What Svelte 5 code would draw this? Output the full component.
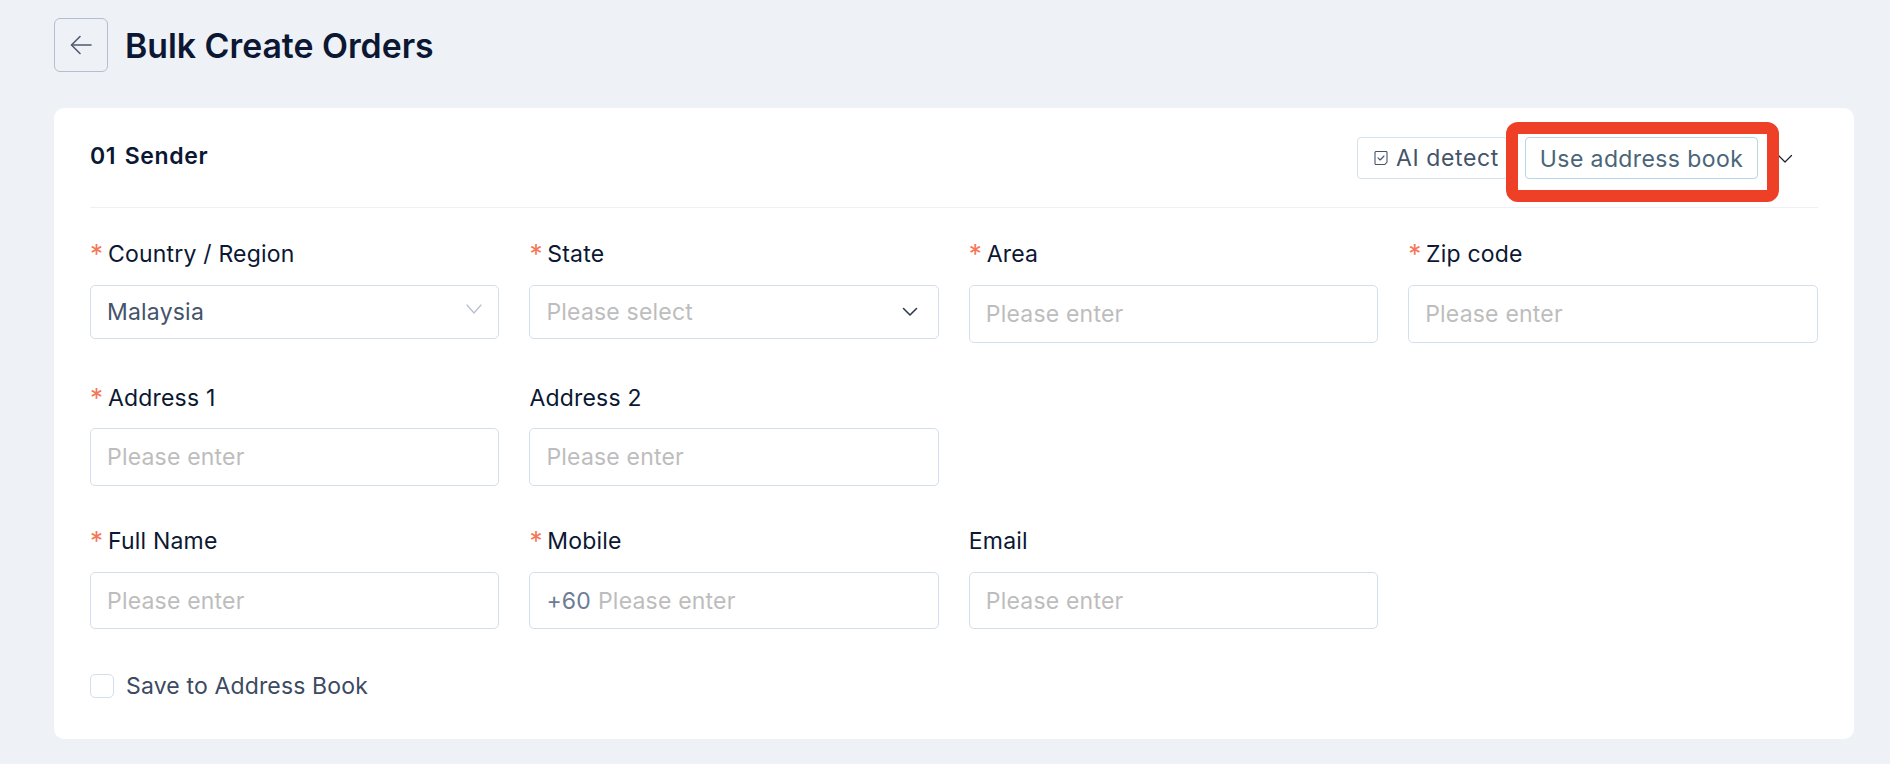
<script>
  const rows = [
    [
      { label: 'Country / Region', required: true, kind: 'select', value: 'Malaysia' },
      { label: 'State', required: true, kind: 'select', placeholder: 'Please select' },
      { label: 'Area', required: true },
      { label: 'Zip code', required: true }
    ],
    [
      { label: 'Address 1', required: true },
      { label: 'Address 2' }
    ],
    [
      { label: 'Full Name', required: true },
      { label: 'Mobile', required: true, prefix: '+60' },
      { label: 'Email' }
    ]
  ];
</script>

<div class="page">
  <header class="top">
    <button class="back" aria-label="Back">
      <svg viewBox="0 0 24 24" width="24" height="24" fill="none" stroke="#4f5b6f" stroke-width="1.6" stroke-linecap="round" stroke-linejoin="round">
        <path d="M22 12H3" />
        <path d="M11 3.5 2.5 12l8.5 8.5" />
      </svg>
    </button>
    <h1>Bulk Create Orders</h1>
  </header>

  <section class="card">
    <div class="card-head">
      <h2>01 Sender</h2>
      <div class="actions">
        <button class="btn ai">
          <svg viewBox="0 0 14 14" width="14" height="14" fill="none" stroke="#44546a" stroke-width="1.1">
            <path d="M1 1.5a1 1 0 0 1 1-1h10a1 1 0 0 1 1 1v9.5l-2.2 2.5H2a1 1 0 0 1-1-1z" />
            <path d="M4 6.8 6.2 9l3.8-4" stroke-linecap="round" stroke-linejoin="round" />
          </svg>
          AI detect
        </button>
        <div class="marked">
          <button class="btn book">Use address book</button>
          <span class="mark"></span>
        </div>
        <svg class="collapse" viewBox="0 0 16 10" width="16" height="10" fill="none" stroke="#1a2236" stroke-width="1.2" stroke-linecap="round" stroke-linejoin="round">
          <path d="M1.5 1.5 8 8l6.5-6.5" />
        </svg>
      </div>
    </div>

    <div class="form">
      {#each rows as row}
        <div class="row">
          {#each row as field}
            <div class="field">
              <div class="label">
                {#if field.required}<span class="star">*</span>{/if}
                {field.label}
              </div>
              {#if field.kind === 'select'}
                <div class="control select">
                  {#if field.value}
                    <span class="value">{field.value}</span>
                    <svg class="chev light" viewBox="0 0 16 10" width="16" height="10" fill="none" stroke="#b4bfd0" stroke-width="1.2" stroke-linecap="round" stroke-linejoin="round">
                      <path d="M1 1l7 8 7-8" />
                    </svg>
                  {:else}
                    <span class="ph">{field.placeholder}</span>
                    <svg class="chev" viewBox="0 0 16 10" width="16" height="10" fill="none" stroke="#2f3a4f" stroke-width="1.6" stroke-linecap="round" stroke-linejoin="round">
                      <path d="M1.5 1.5 8 8l6.5-6.5" />
                    </svg>
                  {/if}
                </div>
              {:else}
                <div class="control">
                  {#if field.prefix}<span class="prefix">{field.prefix}</span>{/if}
                  <span class="ph">Please enter</span>
                </div>
              {/if}
            </div>
          {/each}
        </div>
      {/each}
    </div>

    <label class="save">
      <span class="box"></span>
      Save to Address Book
    </label>
  </section>
</div>

<style>
  :global(body) {
    margin: 0;
    background: #eef1f6;
  }

  .page {
    height: 764px;
    box-sizing: border-box;
    padding: 18px 36px 0 54px;
    font-family: Inter, "Liberation Sans", sans-serif;
    color: #0b1733;
    overflow: hidden;
  }

  .top {
    display: flex;
    align-items: center;
    gap: 17px;
    height: 54px;
    margin-bottom: 36px;
  }

  .back {
    display: flex;
    align-items: center;
    justify-content: center;
    width: 54px;
    height: 54px;
    padding: 0;
    border: 1px solid #b3bfd0;
    border-radius: 6px;
    background: transparent;
  }

  h1 {
    margin: 0;
    font-size: 33.8px;
    font-weight: 600;
  }

  .card {
    height: 631px;
    box-sizing: border-box;
    padding: 0 36px;
    background: #fff;
    border-radius: 10px;
  }

  .card-head {
    display: flex;
    justify-content: space-between;
    height: 100px;
    box-sizing: border-box;
    padding-top: 29px;
    border-bottom: 1px solid #edf0f4;
  }

  h2 {
    margin: 1px 0 0;
    font-size: 23px;
    font-weight: 600;
    line-height: 36px;
    letter-spacing: 0.65px;
    word-spacing: 2px;
  }

  .actions {
    display: flex;
    align-items: center;
    height: 42px;
    margin-right: 25px;
  }

  .btn {
    display: flex;
    align-items: center;
    height: 42px;
    box-sizing: border-box;
    border-radius: 4px;
    background: #fff;
    font-family: inherit;
    font-size: 23px;
    letter-spacing: 0.4px;
  }

  .ai {
    gap: 8px;
    width: 151px;
    padding: 0 0 0 16px;
    margin-right: 17px;
    border: 1px solid #d6e1ee;
    color: #44546a;
    letter-spacing: 0.6px;
    white-space: nowrap;
  }

  .marked {
    position: relative;
    z-index: 1;
  }

  .book {
    width: 233px;
    justify-content: center;
    padding: 1px 0 0;
    border: 1px solid #b5d8e2;
    color: #4a6578;
    white-space: nowrap;
  }

  .mark {
    position: absolute;
    inset: -15px -21px -23px -19px;
    border: 12px solid #ee4026;
    border-radius: 12px;
    pointer-events: none;
  }

  .collapse {
    margin-left: 19px;
    margin-top: 2px;
  }

  .form {
    display: flex;
    flex-direction: column;
    gap: 40px;
    padding-top: 31.2px;
  }

  .row {
    display: grid;
    grid-template-columns: repeat(4, 409.4px);
    column-gap: 30px;
  }

  .label {
    height: 30px;
    margin-bottom: 15.8px;
    font-size: 23px;
    line-height: 30px;
    letter-spacing: 0.2px;
    white-space: nowrap;
  }

  .star {
    margin-right: -2px;
    color: #f4775a;
    font-size: 26px;
    line-height: 0;
    vertical-align: -1px;
  }

  .control {
    display: flex;
    align-items: center;
    gap: 7px;
    height: 57.6px;
    box-sizing: border-box;
    padding: 0 20px 0 16px;
    border: 1px solid #d3dfec;
    border-radius: 5px;
    font-size: 23px;
    letter-spacing: 0.2px;
  }

  .select {
    height: 54px;
    justify-content: space-between;
  }

  .value {
    color: #44546a;
  }

  .ph {
    color: #bdbdbd;
  }

  .prefix {
    color: #6c7c94;
  }

  .chev.light {
    margin-top: -6px;
    margin-right: -4px;
  }

  .save {
    display: flex;
    align-items: center;
    gap: 12px;
    margin-top: 42.2px;
    color: #3c4a62;
    font-size: 23px;
    letter-spacing: 0.15px;
  }

  .box {
    width: 24px;
    height: 24px;
    box-sizing: border-box;
    border: 1px solid #d3dfec;
    border-radius: 5px;
  }
</style>
